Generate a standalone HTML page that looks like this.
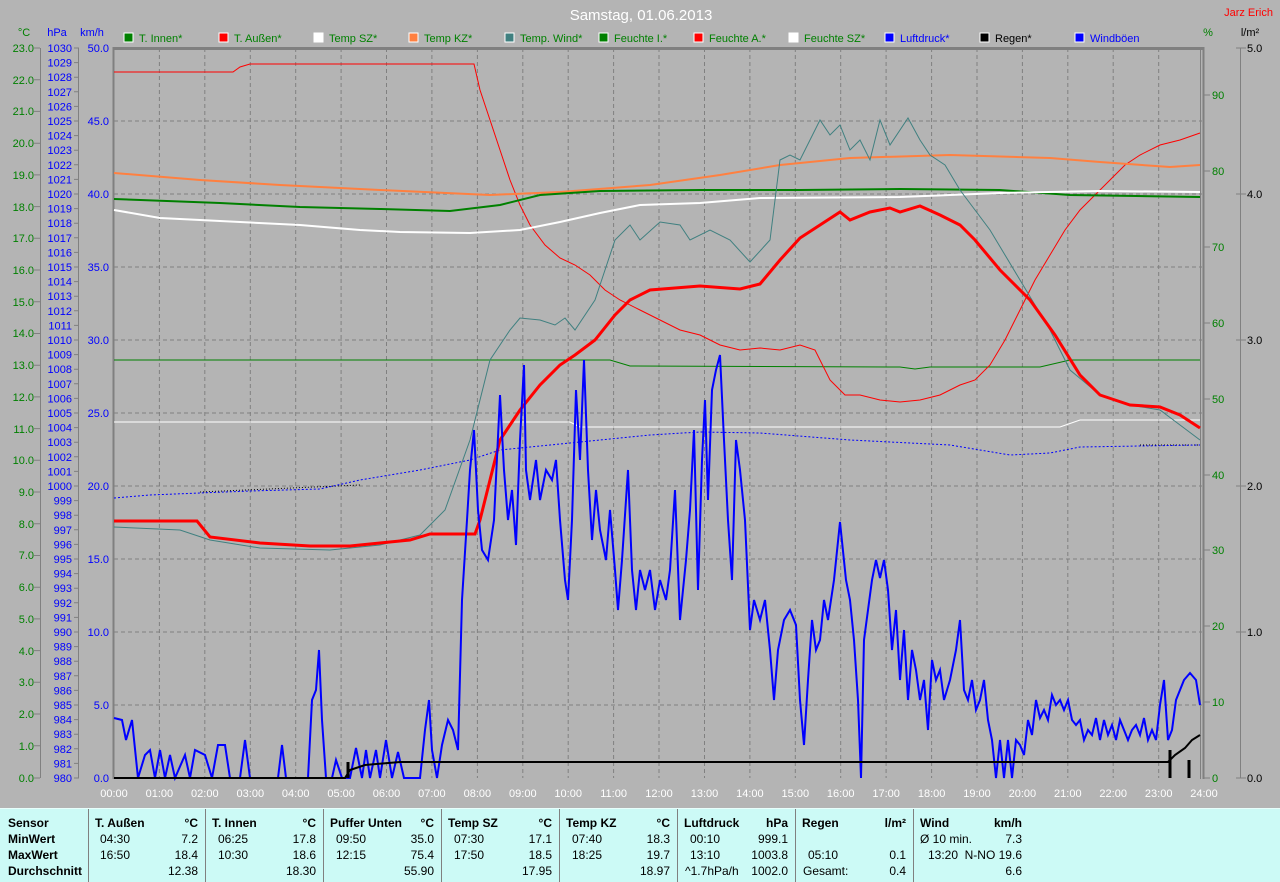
<!DOCTYPE html>
<html><head><meta charset="utf-8"><style>
body{margin:0;width:1280px;height:881px;overflow:hidden;background:#b4b4b4;font-family:"Liberation Sans",sans-serif}
svg{position:absolute;left:0;top:0}
#tbl{position:absolute;left:0;top:808px;width:1280px;height:73px;background:#ccfaf6;border-top:1px solid #e8fffc}
.t{position:absolute;font-size:12px;color:#000;white-space:nowrap}
.b{font-weight:bold}
.r{text-align:right}
.s{position:absolute;top:0;width:1px;height:73px;background:#808080}
</style></head><body>
<svg width="1280" height="808" font-family="Liberation Sans, sans-serif">
<text x="641" y="20" fill="#fff" font-size="15" text-anchor="middle">Samstag, 01.06.2013</text>
<text x="1273" y="16" fill="#f00" font-size="11" text-anchor="end">Jarz Erich</text>
<g font-size="11">
<text x="24" y="36" fill="#008000" text-anchor="middle">°C</text>
<text x="57" y="36" fill="#00f" text-anchor="middle">hPa</text>
<text x="92" y="36" fill="#00f" text-anchor="middle">km/h</text>
<text x="1208" y="36" fill="#008000" text-anchor="middle">%</text>
<text x="1250" y="36" fill="#000" text-anchor="middle">l/m²</text>
</g>
<g font-size="11" fill="#008000">
<rect x="124" y="33" width="9" height="9" fill="#008000" stroke="#fff"/><text x="139" y="42">T. Innen*</text>
<rect x="219" y="33" width="9" height="9" fill="#f00" stroke="#fff"/><text x="234" y="42">T. Außen*</text>
<rect x="314" y="33" width="9" height="9" fill="#fff" stroke="#fff"/><text x="329" y="42">Temp SZ*</text>
<rect x="409" y="33" width="9" height="9" fill="#ff8040" stroke="#fff"/><text x="424" y="42">Temp KZ*</text>
<rect x="505" y="33" width="9" height="9" fill="#408080" stroke="#fff"/><text x="520" y="42">Temp. Wind*</text>
<rect x="599" y="33" width="9" height="9" fill="#008000" stroke="#fff"/><text x="614" y="42">Feuchte I.*</text>
<rect x="694" y="33" width="9" height="9" fill="#f00" stroke="#fff"/><text x="709" y="42">Feuchte A.*</text>
<rect x="789" y="33" width="9" height="9" fill="#fff" stroke="#fff"/><text x="804" y="42">Feuchte SZ*</text>
<rect x="885" y="33" width="9" height="9" fill="#00f" stroke="#fff"/><text x="900" y="42" fill="#00f">Luftdruck*</text>
<rect x="980" y="33" width="9" height="9" fill="#000" stroke="#fff"/><text x="995" y="42" fill="#000">Regen*</text>
<rect x="1075" y="33" width="9" height="9" fill="#00f" stroke="#fff"/><text x="1090" y="42" fill="#00f">Windböen</text>
</g>
<!-- grid -->
<g stroke="#808080" stroke-dasharray="4,3" stroke-width="1">
<path d="M114 121H1202M114 194H1202M114 267H1202M114 340H1202M114 413H1202M114 486H1202M114 559H1202M114 632H1202M114 705H1202"/>
<path d="M159.4 48V778M204.8 48V778M250.3 48V778M295.7 48V778M341.1 48V778M386.5 48V778M431.9 48V778M477.4 48V778M522.8 48V778M568.2 48V778M613.6 48V778M659 48V778M704.5 48V778M749.9 48V778M795.3 48V778M840.7 48V778M886.1 48V778M931.6 48V778M977 48V778M1022.4 48V778M1067.8 48V778M1113.2 48V778M1158.7 48V778"/>
</g>
<g stroke="#808080" fill="none">
<path d="M113 48.5H1204" stroke-width="3"/>
<path d="M113.5 47V779" stroke-width="2"/>
<path d="M1203.5 47V779" stroke-width="2"/><path d="M1200.5 48V779" stroke-width="1"/>
<path d="M40.5 48V778M78.5 48V778M1240.5 48V778"/>
<path d="M34 48H40M34 79.7H40M34 111.4H40M34 143.2H40M34 174.9H40M34 206.6H40M34 238.3H40M34 270H40M34 301.8H40M34 333.5H40M34 365.2H40M34 396.9H40M34 428.6H40M34 460.3H40M34 492H40M34 523.8H40M34 555.5H40M34 587.2H40M34 618.9H40M34 650.6H40M34 682.3H40M34 714H40M34 745.7H40M34 778H40"/>
<path d="M74 48H79M74 62.6H79M74 77.2H79M74 91.8H79M74 106.4H79M74 121H79M74 135.6H79M74 150.2H79M74 164.8H79M74 179.4H79M74 194H79M74 208.6H79M74 223.2H79M74 237.8H79M74 252.4H79M74 267H79M74 281.6H79M74 296.2H79M74 310.8H79M74 325.4H79M74 340H79M74 354.6H79M74 369.2H79M74 383.8H79M74 398.4H79M74 413H79M74 427.6H79M74 442.2H79M74 456.8H79M74 471.4H79M74 486H79M74 500.6H79M74 515.2H79M74 529.8H79M74 544.4H79M74 559H79M74 573.6H79M74 588.2H79M74 602.8H79M74 617.4H79M74 632H79M74 646.6H79M74 661.2H79M74 675.8H79M74 690.4H79M74 705H79M74 719.6H79M74 734.2H79M74 748.8H79M74 763.4H79M74 778H79"/>
<path d="M1204 95H1210M1204 171H1210M1204 247H1210M1204 323H1210M1204 399H1210M1204 475H1210M1204 550H1210M1204 626H1210M1204 702H1210M1204 778H1210"/>
<path d="M1236 48H1246M1236 194H1246M1236 340H1246M1236 486H1246M1236 632H1246M1236 778H1246"/>
</g>
<g font-size="11" fill="#008000" text-anchor="end">
<text x="34" y="52">23.0</text><text x="34" y="84">22.0</text><text x="34" y="115">21.0</text><text x="34" y="147">20.0</text><text x="34" y="179">19.0</text><text x="34" y="211">18.0</text><text x="34" y="242">17.0</text><text x="34" y="274">16.0</text><text x="34" y="306">15.0</text><text x="34" y="337">14.0</text><text x="34" y="369">13.0</text><text x="34" y="401">12.0</text><text x="34" y="433">11.0</text><text x="34" y="464">10.0</text><text x="34" y="496">9.0</text><text x="34" y="528">8.0</text><text x="34" y="559">7.0</text><text x="34" y="591">6.0</text><text x="34" y="623">5.0</text><text x="34" y="655">4.0</text><text x="34" y="686">3.0</text><text x="34" y="718">2.0</text><text x="34" y="750">1.0</text><text x="34" y="782">0.0</text>
</g>
<g font-size="11" fill="#00f" text-anchor="end">
<text x="72" y="52">1030</text><text x="72" y="66.6">1029</text><text x="72" y="81.2">1028</text><text x="72" y="95.8">1027</text><text x="72" y="110.4">1026</text><text x="72" y="125">1025</text><text x="72" y="139.6">1024</text><text x="72" y="154.2">1023</text><text x="72" y="168.8">1022</text><text x="72" y="183.4">1021</text><text x="72" y="198">1020</text><text x="72" y="212.6">1019</text><text x="72" y="227.2">1018</text><text x="72" y="241.8">1017</text><text x="72" y="256.4">1016</text><text x="72" y="271">1015</text><text x="72" y="285.6">1014</text><text x="72" y="300.2">1013</text><text x="72" y="314.8">1012</text><text x="72" y="329.4">1011</text><text x="72" y="344">1010</text><text x="72" y="358.6">1009</text><text x="72" y="373.2">1008</text><text x="72" y="387.8">1007</text><text x="72" y="402.4">1006</text><text x="72" y="417">1005</text><text x="72" y="431.6">1004</text><text x="72" y="446.2">1003</text><text x="72" y="460.8">1002</text><text x="72" y="475.4">1001</text><text x="72" y="490">1000</text><text x="72" y="504.6">999</text><text x="72" y="519.2">998</text><text x="72" y="533.8">997</text><text x="72" y="548.4">996</text><text x="72" y="563">995</text><text x="72" y="577.6">994</text><text x="72" y="592.2">993</text><text x="72" y="606.8">992</text><text x="72" y="621.4">991</text><text x="72" y="636">990</text><text x="72" y="650.6">989</text><text x="72" y="665.2">988</text><text x="72" y="679.8">987</text><text x="72" y="694.4">986</text><text x="72" y="709">985</text><text x="72" y="723.6">984</text><text x="72" y="738.2">983</text><text x="72" y="752.8">982</text><text x="72" y="767.4">981</text><text x="72" y="782">980</text>
<text x="109" y="52">50.0</text><text x="109" y="125">45.0</text><text x="109" y="198">40.0</text><text x="109" y="271">35.0</text><text x="109" y="344">30.0</text><text x="109" y="417">25.0</text><text x="109" y="490">20.0</text><text x="109" y="563">15.0</text><text x="109" y="636">10.0</text><text x="109" y="709">5.0</text><text x="109" y="782">0.0</text>
</g>
<g font-size="11" fill="#008000">
<text x="1212" y="99">90</text><text x="1212" y="175">80</text><text x="1212" y="251">70</text><text x="1212" y="327">60</text><text x="1212" y="403">50</text><text x="1212" y="479">40</text><text x="1212" y="554">30</text><text x="1212" y="630">20</text><text x="1212" y="706">10</text><text x="1212" y="782">0</text>
</g>
<g font-size="11" fill="#000">
<text x="1247" y="52">5.0</text><text x="1247" y="198">4.0</text><text x="1247" y="344">3.0</text><text x="1247" y="490">2.0</text><text x="1247" y="636">1.0</text><text x="1247" y="782">0.0</text>
</g>
<g font-size="11" fill="#fff" text-anchor="middle">
<text x="114" y="797">00:00</text><text x="159.4" y="797">01:00</text><text x="204.8" y="797">02:00</text><text x="250.3" y="797">03:00</text><text x="295.7" y="797">04:00</text><text x="341.1" y="797">05:00</text><text x="386.5" y="797">06:00</text><text x="431.9" y="797">07:00</text><text x="477.4" y="797">08:00</text><text x="522.8" y="797">09:00</text><text x="568.2" y="797">10:00</text><text x="613.6" y="797">11:00</text><text x="659" y="797">12:00</text><text x="704.5" y="797">13:00</text><text x="749.9" y="797">14:00</text><text x="795.3" y="797">15:00</text><text x="840.7" y="797">16:00</text><text x="886.1" y="797">17:00</text><text x="931.6" y="797">18:00</text><text x="977" y="797">19:00</text><text x="1022.4" y="797">20:00</text><text x="1067.8" y="797">21:00</text><text x="1113.2" y="797">22:00</text><text x="1158.7" y="797">23:00</text><text x="1204" y="797">24:00</text>
</g>
<!-- data -->
<g fill="none">
<path stroke="#000" stroke-dasharray="1,2" d="M200 492L360 485M1140 445L1200 445"/>
<path stroke="#00f" stroke-dasharray="2,2" d="M114 498L150 495L200 493L250 491L320 489L360 480L420 470L470 460L500 450L550 445L600 440L650 435L700 432L760 433L850 440L950 445L1010 455L1050 453L1080 447L1200 445"/>
<path stroke="#008000" d="M114 360L610 360L630 366L900 367L915 369L930 367L1040 367L1070 360L1200 360"/>
<path stroke="#fff" d="M114 422L570 422L580 427L1060 427L1080 420L1200 420"/>
<path stroke="#f00" d="M114 72L233 72L240 67L250 64L474 64L480 90L490 120L500 150L510 180L520 205L530 225L545 245L560 258L575 265L590 275L605 290L620 300L640 310L660 320L680 330L700 335L720 345L740 350L760 348L780 350L800 345L815 350L830 380L845 395L860 395L880 400L900 402L920 400L940 395L960 385L975 380L990 365L1005 340L1020 310L1035 280L1050 255L1065 230L1080 210L1095 195L1110 180L1125 165L1140 155L1160 145L1180 140L1200 133"/>
<path stroke="#ff8040" stroke-width="2" d="M114 173L200 180L280 185L380 190L490 195L560 192L650 185L720 175L780 165L850 158L950 155L1050 158L1100 162L1170 167L1200 165"/>
<path stroke="#008000" stroke-width="2" d="M114 199L220 203L300 207L380 209L450 211L500 205L540 195L600 191L700 190L800 190L900 189L1000 190L1070 195L1200 197"/>
<path stroke="#fff" stroke-width="2" d="M114 210L160 218L240 222L300 225L360 230L400 232L470 233L520 230L560 222L600 213L640 205L700 203L760 198L900 197L1000 193L1100 191L1200 192"/>
<path stroke="#408080" d="M114 527L180 530L210 540L260 548L330 550L380 545L420 535L445 510L470 440L480 400L490 360L510 330L520 318L540 320L555 325L565 318L575 330L595 300L605 270L615 240L630 225L640 240L660 222L680 225L690 240L710 230L730 240L750 262L770 240L780 160L790 155L800 160L820 120L830 135L840 125L850 150L860 140L870 160L880 120L890 145L908 118L920 140L930 155L945 165L960 190L990 230L1020 280L1050 330L1070 370L1100 395L1130 405L1160 410L1180 425L1200 440"/>
<path stroke="#f00" stroke-width="3" d="M114 521L197 521L210 537L260 543L310 546L350 546L380 543L410 540L430 534L475 534L480 520L490 480L500 440L520 410L540 385L560 365L575 355L595 340L615 315L630 300L650 290L700 286L740 289L760 284L780 260L800 238L820 225L840 212L850 220L870 212L890 208L900 212L920 206L940 215L960 225L975 240L1000 270L1030 300L1055 335L1080 375L1100 395L1130 405L1160 407L1180 415L1200 428"/>
<path stroke="#00f" stroke-width="2" d="M114 718L122 720L126 740L132 720L138 778L145 755L150 750L155 778L160 750L165 778L170 755L175 778L185 755L190 778L195 750L205 755L212 778L218 745L225 745L230 778L240 778L245 740L250 778L278 778L282 745L286 778L308 778L312 700L316 690L319 650L322 720L326 778L332 778L336 760L342 778L350 778L356 748L362 778L366 750L370 778L376 750L380 778L386 740L392 778L398 752L404 778L420 778L425 730L429 700L432 750L437 778L442 745L448 720L453 730L458 750L462 600L467 520L470 470L474 430L478 510L482 550L488 560L494 520L500 395L504 470L508 520L512 490L516 545L520 440L524 365L526 470L530 500L536 460L540 500L546 470L552 480L556 460L560 520L565 580L568 600L572 520L576 390L580 460L584 360L588 470L592 540L596 490L600 530L606 560L610 510L615 570L618 610L622 560L628 470L632 570L636 610L640 570L645 590L650 570L655 610L660 580L666 600L670 570L675 490L680 620L686 560L690 510L694 430L698 590L702 460L705 400L708 500L712 390L716 370L720 355L724 440L728 520L732 580L736 440L740 470L745 520L750 630L754 600L760 620L765 600L770 650L774 700L778 650L784 620L790 610L796 625L800 700L804 745L808 680L812 620L816 650L820 640L824 600L828 620L834 580L840 522L846 580L850 600L854 640L858 700L861 778L864 640L868 610L872 580L876 560L880 578L884 560L888 590L892 650L896 610L900 680L904 630L908 700L912 650L916 670L920 700L924 680L928 730L932 660L936 680L940 670L944 700L950 680L956 650L960 620L964 690L968 700L972 680L976 710L980 700L984 680L988 720L992 740L996 778L1000 740L1004 778L1008 740L1012 778L1016 740L1020 745L1024 755L1028 720L1032 735L1036 700L1040 718L1044 710L1048 720L1052 695L1056 705L1060 700L1064 710L1068 700L1072 720L1076 725L1080 720L1084 740L1088 730L1092 735L1096 718L1100 740L1104 720L1108 735L1112 725L1116 740L1120 720L1124 730L1128 740L1132 730L1136 725L1140 735L1144 718L1148 740L1152 730L1156 740L1160 705L1164 680L1168 740L1172 730L1176 700L1180 690L1184 680L1190 673L1196 680L1200 705"/>
<path stroke="#000" stroke-width="2" d="M114 778L345 778L350 770L365 765L400 762L1168 762L1175 755L1185 748L1192 740L1200 735"/>
<path stroke="#000" stroke-width="3" d="M348 778V762M1170 778V750M1189 778V760"/>
</g>
</svg>
<div id="tbl">
<div class="s" style="left:88px"></div><div class="s" style="left:205px"></div><div class="s" style="left:323px"></div><div class="s" style="left:441px"></div><div class="s" style="left:559px"></div><div class="s" style="left:677px"></div><div class="s" style="left:795px"></div><div class="s" style="left:913px"></div>
<div class="t b" style="left:8px;top:7px">Sensor</div><div class="t b" style="left:8px;top:23px">MinWert</div><div class="t b" style="left:8px;top:39px">MaxWert</div><div class="t b" style="left:8px;top:55px">Durchschnitt</div>

<div class="t b" style="left:95px;top:7px">T. Außen</div><div class="t b r" style="right:1082px;top:7px">°C</div>
<div class="t" style="left:100px;top:23px">04:30</div><div class="t r" style="right:1082px;top:23px">7.2</div>
<div class="t" style="left:100px;top:39px">16:50</div><div class="t r" style="right:1082px;top:39px">18.4</div>
<div class="t r" style="right:1082px;top:55px">12.38</div>

<div class="t b" style="left:212px;top:7px">T. Innen</div><div class="t b r" style="right:964px;top:7px">°C</div>
<div class="t" style="left:218px;top:23px">06:25</div><div class="t r" style="right:964px;top:23px">17.8</div>
<div class="t" style="left:218px;top:39px">10:30</div><div class="t r" style="right:964px;top:39px">18.6</div>
<div class="t r" style="right:964px;top:55px">18.30</div>

<div class="t b" style="left:330px;top:7px">Puffer Unten</div><div class="t b r" style="right:846px;top:7px">°C</div>
<div class="t" style="left:336px;top:23px">09:50</div><div class="t r" style="right:846px;top:23px">35.0</div>
<div class="t" style="left:336px;top:39px">12:15</div><div class="t r" style="right:846px;top:39px">75.4</div>
<div class="t r" style="right:846px;top:55px">55.90</div>

<div class="t b" style="left:448px;top:7px">Temp SZ</div><div class="t b r" style="right:728px;top:7px">°C</div>
<div class="t" style="left:454px;top:23px">07:30</div><div class="t r" style="right:728px;top:23px">17.1</div>
<div class="t" style="left:454px;top:39px">17:50</div><div class="t r" style="right:728px;top:39px">18.5</div>
<div class="t r" style="right:728px;top:55px">17.95</div>

<div class="t b" style="left:566px;top:7px">Temp KZ</div><div class="t b r" style="right:610px;top:7px">°C</div>
<div class="t" style="left:572px;top:23px">07:40</div><div class="t r" style="right:610px;top:23px">18.3</div>
<div class="t" style="left:572px;top:39px">18:25</div><div class="t r" style="right:610px;top:39px">19.7</div>
<div class="t r" style="right:610px;top:55px">18.97</div>

<div class="t b" style="left:684px;top:7px">Luftdruck</div><div class="t b r" style="right:492px;top:7px">hPa</div>
<div class="t" style="left:690px;top:23px">00:10</div><div class="t r" style="right:492px;top:23px">999.1</div>
<div class="t" style="left:690px;top:39px">13:10</div><div class="t r" style="right:492px;top:39px">1003.8</div>
<div class="t" style="left:685px;top:55px">^1.7hPa/h</div><div class="t r" style="right:492px;top:55px">1002.0</div>

<div class="t b" style="left:802px;top:7px">Regen</div><div class="t b r" style="right:374px;top:7px">l/m²</div>
<div class="t" style="left:808px;top:39px">05:10</div><div class="t r" style="right:374px;top:39px">0.1</div>
<div class="t" style="left:803px;top:55px">Gesamt:</div><div class="t r" style="right:374px;top:55px">0.4</div>

<div class="t b" style="left:920px;top:7px">Wind</div><div class="t b r" style="right:258px;top:7px">km/h</div>
<div class="t" style="left:920px;top:23px">Ø 10 min.</div><div class="t r" style="right:258px;top:23px">7.3</div>
<div class="t" style="left:928px;top:39px">13:20</div><div class="t r" style="right:258px;top:39px">N-NO 19.6</div>
<div class="t r" style="right:258px;top:55px">6.6</div>
</div>
</body></html>
